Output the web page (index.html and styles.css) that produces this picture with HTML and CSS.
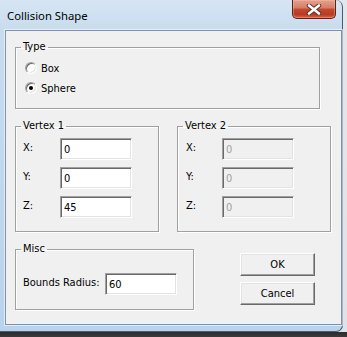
FILE: index.html
```html
<!DOCTYPE html>
<html>
<head>
<meta charset="utf-8">
<link rel="stylesheet" href="styles.css">
</head>
<body>
<div class="window">
  <div class="titlebar">
    <span class="title">Collision Shape</span>
    <div class="close">
      <svg width="16" height="11" viewBox="0 0 16 11">
        <path d="M3 1.5 L13 9.5 M13 1.5 L3 9.5" stroke="#5b2a22" stroke-width="4.4" stroke-linecap="round"/>
        <path d="M3 1.5 L13 9.5 M13 1.5 L3 9.5" stroke="#ffffff" stroke-width="2.6" stroke-linecap="round"/>
      </svg>
    </div>
  </div>
  <div class="client">
    <fieldset class="group type">
      <legend>Type</legend>
      <div class="radios">
        <label class="radio-row"><span class="radio"></span>Box</label>
        <label class="radio-row"><span class="radio checked"></span>Sphere</label>
      </div>
    </fieldset>

    <div class="vertices">
      <fieldset class="group vertex v1">
        <legend>Vertex 1</legend>
        <div class="fields">
          <div class="field"><span class="lbl">X:</span><input class="edit" type="text" value="0"></div>
          <div class="field"><span class="lbl">Y:</span><input class="edit" type="text" value="0"></div>
          <div class="field"><span class="lbl">Z:</span><input class="edit" type="text" value="45"></div>
        </div>
      </fieldset>
      <fieldset class="group vertex v2">
        <legend>Vertex 2</legend>
        <div class="fields">
          <div class="field"><span class="lbl">X:</span><input class="edit" type="text" value="0" disabled></div>
          <div class="field"><span class="lbl">Y:</span><input class="edit" type="text" value="0" disabled></div>
          <div class="field"><span class="lbl">Z:</span><input class="edit" type="text" value="0" disabled></div>
        </div>
      </fieldset>
    </div>

    <div class="bottom">
      <fieldset class="group misc">
        <legend>Misc</legend>
        <div class="misc-row">
          <span class="lbl wide">Bounds Radius:</span><input class="edit" type="text" value="60">
        </div>
      </fieldset>
      <div class="buttons">
        <button class="btn">OK</button>
        <button class="btn">Cancel</button>
      </div>
    </div>
  </div>
</div>
</body>
</html>
```
FILE: styles.css
```css
html, body {
  margin: 0;
  padding: 0;
}
body {
  width: 347px;
  height: 337px;
  overflow: hidden;
  background: linear-gradient(to bottom, #e4e7ea 0, #dfe3e7 332px, #2c2c2c 332px, #3a3a3a 337px);
  font-family: Tahoma, "DejaVu Sans Condensed", "Liberation Sans", sans-serif;
  font-size: 11px;
  color: #000;
}
.window {
  width: 342px;
  height: 331px;
  border-right: 1px solid #4a5b70;
  border-bottom: 1px solid #4a5b70;
  border-radius: 0 7px 7px 0;
  background: linear-gradient(to bottom, #d6e5f3 0, #c8dcef 30px, #bad2eb 100%);
  display: flex;
  flex-direction: column;
}
.titlebar {
  height: 30px;
  display: flex;
  justify-content: space-between;
  align-items: flex-start;
  padding: 0 6px 0 7px;
}
.title {
  font-family: "Segoe UI", "Noto Sans", sans-serif;
  font-size: 11.3px;
  line-height: 14px;
  margin-top: 9px;
  color: #000;
}
.close {
  width: 42px;
  height: 18px;
  border: 1px solid #5c2219;
  border-top: none;
  border-radius: 0 0 5px 5px;
  background: linear-gradient(to bottom, #e6a18e 0, #d47d66 45%, #c24a30 50%, #b83a22 80%, #d0664a 100%);
  box-shadow: inset 0 0 0 1px rgba(255,200,180,.35);
  display: flex;
  align-items: center;
  justify-content: center;
}
.close svg { display: block; }
.client {
  margin: 0 0 6px 5px;
  flex: 1;
  background: #f0f0f0;
  border: 1px solid #7f92a8;
  box-shadow: 0 0 0 1px rgba(255,255,255,.55);
  padding: 9px 0 0 9px;
  box-sizing: border-box;
  display: flex;
  flex-direction: column;
}
.group {
  margin: 0;
  padding: 0;
  border: 1px solid #a0a0a0;
  box-shadow: inset 1px 1px 0 #fff, 1px 1px 0 #fff;
  min-width: 0;
}
.group legend {
  margin-left: 5px;
  padding: 0 2px;
  line-height: 14px;
  font-size: 11px;
}
.type {
  width: 305px;
  box-sizing: border-box;
}
.radios {
  padding: 4px 0 10px 9px;
  display: flex;
  flex-direction: column;
}
.radio-row {
  height: 20px;
  display: flex;
  align-items: center;
  gap: 4px;
}
.radio {
  width: 12px;
  height: 12px;
  box-sizing: border-box;
  border-radius: 50%;
  background: #fff;
  border: 1px solid;
  border-color: #a0a0a0 #ffffff #ffffff #a0a0a0;
  box-shadow: inset 1px 1px 0 #696969, inset -1px -1px 0 #e3e3e3;
  display: flex;
  align-items: center;
  justify-content: center;
}
.radio.checked::after {
  content: "";
  width: 4px;
  height: 4px;
  border-radius: 50%;
  background: #000;
}
.vertices {
  margin-top: 10px;
  display: flex;
  gap: 18px;
}
.v1 { width: 144px; box-sizing: border-box; }
.v2 { width: 154px; box-sizing: border-box; }
.fields {
  padding: 5px 0 13px 7px;
  display: flex;
  flex-direction: column;
  gap: 7px;
}
.field {
  display: flex;
  align-items: center;
}
.lbl {
  width: 37px;
  padding-bottom: 3px;
}
.v2 .lbl { padding-left: 1px; width: 36px; }
.edit {
  width: 72px;
  height: 22px;
  box-sizing: border-box;
  margin: 0;
  padding: 0 3px;
  font-family: inherit;
  font-size: 11px;
  color: #000;
  background: #fff;
  border: 1px solid;
  border-color: #a0a0a0 #ffffff #ffffff #a0a0a0;
  box-shadow: inset 1px 1px 0 #696969, inset -1px -1px 0 #e3e3e3;
  outline: none;
}
.edit:disabled {
  background: #f0f0f0;
  color: #a0a0a0;
}
.bottom {
  margin-top: 10px;
  display: flex;
  align-items: flex-start;
}
.misc {
  width: 179px;
  box-sizing: border-box;
}
.misc-row {
  padding: 17px 0 14px 7px;
  display: flex;
  align-items: center;
}
.lbl.wide {
  width: 82px;
}
.buttons {
  margin-left: 46px;
  margin-top: 11px;
  display: flex;
  flex-direction: column;
  gap: 6px;
}
.btn {
  width: 75px;
  height: 23px;
  margin: 0;
  padding: 0;
  font-family: inherit;
  font-size: 11px;
  color: #000;
  background: #f0f0f0;
  border: 1px solid;
  border-color: #ffffff #696969 #696969 #ffffff;
  box-shadow: inset -1px -1px 0 #a0a0a0, inset 1px 1px 0 #e3e3e3;
}
```
